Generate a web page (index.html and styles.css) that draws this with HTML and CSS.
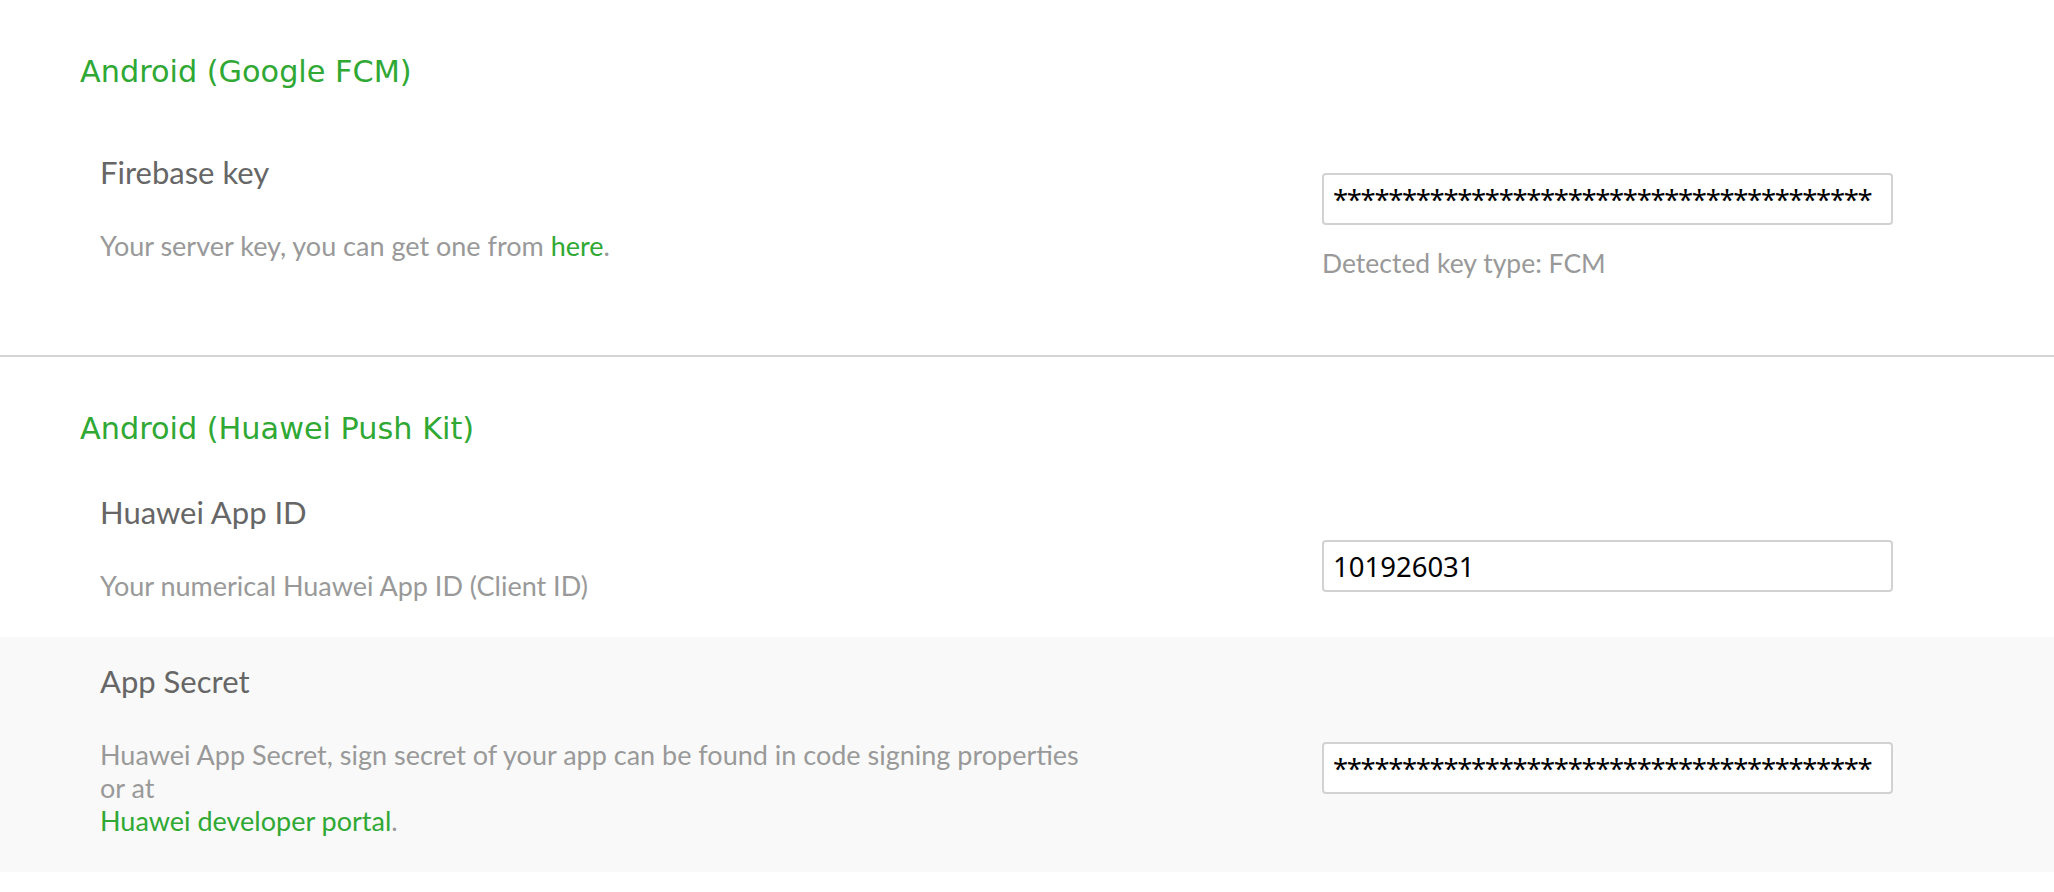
FILE: index.html
```html
<!DOCTYPE html>
<html lang="en">
<head>
<meta charset="utf-8">
<title>Android push settings</title>
<link rel="stylesheet" href="styles.css">
</head>
<body>
<section class="section section-first">
  <h2 class="section-title">Android (Google FCM)</h2>
  <div class="row">
    <div class="row-text">
      <div class="row-label">Firebase key</div>
      <div class="row-desc">Your server key, you can get one from <a class="link" href="#">here</a>.</div>
    </div>
    <div class="row-control">
      <input class="field field-secret" type="text" value="***************************************">
      <div class="field-hint">Detected key type: FCM</div>
    </div>
  </div>
</section>
<section class="section">
  <h2 class="section-title">Android (Huawei Push Kit)</h2>
  <div class="row">
    <div class="row-text">
      <div class="row-label">Huawei App ID</div>
      <div class="row-desc">Your numerical Huawei App ID (Client ID)</div>
    </div>
    <div class="row-control">
      <input class="field" type="text" value="101926031">
    </div>
  </div>
  <div class="row row-shaded">
    <div class="row-text">
      <div class="row-label">App Secret</div>
      <div class="row-desc">Huawei App Secret, sign secret of your app can be found in code signing properties<br>or at<br><a class="link" href="#">Huawei developer portal</a>.</div>
    </div>
    <div class="row-control">
      <input class="field field-secret" type="text" value="***************************************">
    </div>
  </div>
</section>
</body>
</html>
```
FILE: styles.css
```css
* { box-sizing: border-box; }
html, body {
  margin: 0;
  padding: 0;
  background: #ffffff;
}
body {
  font-family: "Lato", "Open Sans", sans-serif;
  color: #666666;
}
.section {
  padding-top: 52px;
}
.section-first {
  padding-bottom: 41px;
  border-bottom: 2px solid #d4d4d4;
}
.section-title {
  margin: 0 0 19px 80px;
  font-family: "DejaVu Sans", "Verdana", sans-serif;
  font-weight: normal;
  font-size: 30.3px;
  line-height: 40px;
  color: #2fa834;
}
.row {
  display: grid;
  grid-template-columns: 1010px 571px;
  column-gap: 212px;
  align-items: center;
  padding: 28px 0 35px 100px;
}
.row-shaded {
  background: #f9f9f9;
}
.row-label {
  font-size: 31px;
  line-height: 32px;
  color: #666666;
}
.row-desc {
  margin-top: 41px;
  font-size: 27px;
  line-height: 33px;
  color: #999999;
  white-space: nowrap;
}
.link {
  color: #2fa834;
  text-decoration: none;
}
.row-control {
  padding-top: 34px;
}
.field {
  display: block;
  width: 571px;
  height: 52px;
  margin: 0;
  padding: 0 9px;
  border: 2px solid #d2d2d2;
  border-radius: 4px;
  background: #ffffff;
  font-family: "Noto Sans", "Open Sans", sans-serif;
  font-size: 27.5px;
  color: #000000;
  outline: none;
}
.field-secret {
  letter-spacing: -1.35px;
}
.field-hint {
  margin-top: 22px;
  font-size: 26.5px;
  line-height: 32px;
  color: #999999;
}
```
